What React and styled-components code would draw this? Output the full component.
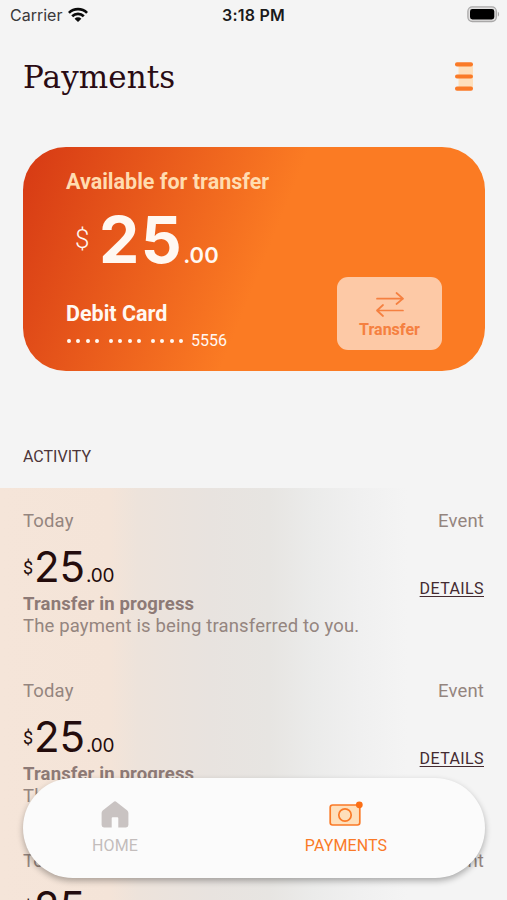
import styled, { createGlobalStyle } from 'styled-components';

const activities = [
  { id: 1, day: 'Today', whole: '25', cents: '.00', status: 'Transfer in progress', note: 'The payment is being transferred to you.' },
  { id: 2, day: 'Today', whole: '25', cents: '.00', status: 'Transfer in progress', note: 'The payment is being transferred to you.' },
  { id: 3, day: 'Today', whole: '25', cents: '.00', status: 'Transfer in progress', note: 'The payment is being transferred to you.' },
];

function StatusBar() {
  return (
    <Status>
      <Carrier>
        Carrier
        <svg width="20" height="16" viewBox="0 0 20 16">
          <g fill="none" stroke="#0b0b0b" strokeWidth="2.7">
            <path d="M0.9 5.9a13 13 0 0 1 18.2 0" />
            <path d="M4.2 9.3a8.3 8.3 0 0 1 11.6 0" />
          </g>
          <path d="M6.6 11.7a4.8 4.8 0 0 1 6.8 0L10 15.1z" fill="#0b0b0b" />
        </svg>
      </Carrier>
      <Clock>3:18 PM</Clock>
      <Battery>
        <svg width="33" height="17" viewBox="0 0 33 17">
          <rect x="0.9" y="0.9" width="28.4" height="14.6" rx="4.4" fill="#e2e1e1" stroke="#a9a8a8" strokeWidth="1.3" />
          <rect x="3" y="3" width="24.3" height="10.4" rx="2.4" fill="#000" />
          <path d="M30.8 5.8c1.7.6 1.7 4.2 0 4.8z" fill="#a9a8a8" />
        </svg>
      </Battery>
    </Status>
  );
}

function Activity({ day, whole, cents, status, note }) {
  return (
    <Item>
      <ItemTop>
        <span>{day}</span>
        <span>Event</span>
      </ItemTop>
      <ItemMiddle>
        <Price>
          <PriceSign>$</PriceSign>
          <PriceWhole>{whole}</PriceWhole>
          <PriceCents>{cents}</PriceCents>
        </Price>
        <Details>DETAILS</Details>
      </ItemMiddle>
      <ItemStatus>{status}</ItemStatus>
      <ItemNote>{note}</ItemNote>
    </Item>
  );
}

function App() {
  return (
    <>
      <GlobalStyle />
      <Screen>
        <StatusBar />
        <Header>
          <Title>Payments</Title>
          <MenuButton aria-label="Menu">
            <svg width="18" height="30" viewBox="0 0 18 30">
              <rect x="3.5" y="4" width="14.5" height="22" fill="#fedfbb" />
              <g fill="#fa7a27">
                <rect x="0" y="0.3" width="18" height="4.2" rx="2" />
                <rect x="0" y="12.4" width="18" height="4.2" rx="2" />
                <rect x="0" y="24.6" width="18" height="4.2" rx="2" />
              </g>
            </svg>
          </MenuButton>
        </Header>

        <Card>
          <CardLabel>Available for transfer</CardLabel>
          <Balance>
            <BalanceSign>$</BalanceSign>
            <BalanceWhole>25</BalanceWhole>
            <BalanceCents>.00</BalanceCents>
          </Balance>
          <CardBottom>
            <CardInfo>
              <CardName>Debit Card</CardName>
              <CardNumber>
                <Dots>
                  {[0, 1, 2].map((group) => (
                    <DotGroup key={group}>
                      <Dot /><Dot /><Dot /><Dot />
                    </DotGroup>
                  ))}
                </Dots>
                5556
              </CardNumber>
            </CardInfo>
            <TransferButton>
              <svg width="28" height="25" viewBox="0 0 28 25" fill="none" stroke="#f58040" strokeWidth="1.7" strokeLinecap="round" strokeLinejoin="round">
                <path d="M1 6.7H27M20.5 1l6.5 5.7-6.5 5.3" />
                <path d="M27 18.5H1M7 13l-6 5.5L7 24" />
              </svg>
              Transfer
            </TransferButton>
          </CardBottom>
        </Card>

        <SectionTitle>ACTIVITY</SectionTitle>
        <List>
          {activities.map((item) => (
            <Activity key={item.id} {...item} />
          ))}
        </List>

        <TabBar>
          <Tab>
            <svg width="28" height="27" viewBox="0 0 28 27">
              <path d="M12.5 0.9a2.2 2.2 0 0 1 3 0L26.3 9.6q1.1 1 1.1 2.5V24q0 2.4-2.4 2.4H17.3V17.2q0-1-1-1h-4.6q-1 0-1 1v9.2H3Q.6 26.4.6 24V12.1q0-1.5 1.1-2.5z" fill="#c9c3c2" />
            </svg>
            HOME
          </Tab>
          <Tab $active>
            <svg width="34" height="27" viewBox="0 0 34 27">
              <rect x="1.2" y="4" width="29.6" height="20" rx="2.4" fill="#fedfbb" stroke="#fa7a27" strokeWidth="1.7" />
              <circle cx="16" cy="14" r="6.2" fill="#fedfbb" stroke="#fa7a27" strokeWidth="1.7" />
              <circle cx="30.3" cy="3.8" r="3.4" fill="#fb6f16" />
            </svg>
            PAYMENTS
          </Tab>
        </TabBar>
      </Screen>
    </>
  );
}

export default App;


const GlobalStyle = createGlobalStyle`
  * {
    box-sizing: border-box;
  }

  body {
    margin: 0;
    background: #f4f4f4;
    font-family: Roboto, 'Liberation Sans', sans-serif;
  }

  svg {
    display: block;
    flex-shrink: 0;
  }

  button {
    padding: 0;
    border: 0;
    background: none;
    font: inherit;
  }
`;

const Screen = styled.div`
  position: relative;
  display: flex;
  flex-direction: column;
  width: 507px;
  height: 900px;
  overflow: hidden;
  background: #f4f4f4;
`;

const Status = styled.div`
  display: grid;
  grid-template-columns: 1fr auto 1fr;
  align-items: center;
  height: 30px;
  padding: 0 7px 0 10px;
  font-family: Inter, sans-serif;
  font-size: 16px;
  color: #1b1a1b;
`;

const Carrier = styled.div`
  display: flex;
  align-items: center;
  gap: 6px;
  color: #3a393a;
`;

const Clock = styled.div`
  margin-left: -3px;
  font-weight: 600;
  letter-spacing: 0.2px;
`;

const Battery = styled.div`
  display: flex;
  justify-content: flex-end;
  padding-bottom: 2px;
`;

const Header = styled.header`
  display: flex;
  justify-content: space-between;
  align-items: center;
  height: 94px;
  padding: 0 34px 0 23px;
`;

const Title = styled.h1`
  margin: 0;
  font-family: 'Roboto Slab', 'DejaVu Serif', serif;
  font-size: 31px;
  font-weight: 400;
  line-height: 40px;
  letter-spacing: 0.1px;
  color: #2a0b13;
`;

const MenuButton = styled.button`
  width: 18px;
`;

const Card = styled.section`
  display: flex;
  flex-direction: column;
  width: 462px;
  height: 224px;
  margin: 23px 0 0 23px;
  padding: 23px 43px 22px;
  border-radius: 43px;
  background: linear-gradient(112deg, #d63914 0%, #fb7b23 52%);
  color: #fff8f2;
`;

const CardLabel = styled.div`
  font-size: 21.5px;
  font-weight: 700;
  line-height: 24px;
  color: #ffdcb0;
`;

const Balance = styled.div`
  display: flex;
  align-items: flex-start;
  height: 60px;
  margin-top: 15px;
  padding-left: 9px;
  font-family: Inter, sans-serif;
`;

const BalanceSign = styled.span`
  width: 24px;
  margin-top: 15px;
  font-family: Roboto, sans-serif;
  font-size: 26px;
  font-weight: 300;
  line-height: 30px;
`;

const BalanceWhole = styled.span`
  margin-top: 1px;
  font-size: 64px;
  font-weight: 700;
  line-height: 60px;
  letter-spacing: 1.5px;
`;

const BalanceCents = styled.span`
  margin-top: 34px;
  font-size: 22px;
  font-weight: 600;
  line-height: 24px;
`;

const CardBottom = styled.div`
  display: flex;
  justify-content: space-between;
  align-items: flex-start;
  margin-top: 8px;
`;

const CardInfo = styled.div`
  padding-top: 25px;
`;

const CardName = styled.div`
  font-size: 21.5px;
  font-weight: 700;
  line-height: 24px;
`;

const CardNumber = styled.div`
  display: flex;
  align-items: center;
  gap: 8px;
  margin-top: 5px;
  font-size: 16px;
  line-height: 20px;
`;

const Dots = styled.div`
  display: flex;
  gap: 10px;
  padding-left: 1px;
`;

const DotGroup = styled.div`
  display: flex;
  gap: 5.6px;
`;

const Dot = styled.span`
  width: 3.8px;
  height: 3.8px;
  border-radius: 50%;
  background: #fff8f2;
`;

const TransferButton = styled.button`
  display: flex;
  flex-direction: column;
  align-items: center;
  gap: 2px;
  width: 105px;
  height: 73px;
  padding-top: 15px;
  border-radius: 11px;
  background: #fdc9a6;
  font-size: 16px;
  font-weight: 700;
  line-height: 21px;
  color: #f58040;
`;

const SectionTitle = styled.h2`
  margin: 76px 0 0 23px;
  font-size: 16px;
  font-weight: 400;
  line-height: 20px;
  color: #4c3438;
`;

const List = styled.div`
  flex: 1;
  min-height: 0;
  margin-top: 21px;
  overflow: hidden;
  background: linear-gradient(90deg, #f5e5d9 0, #f4e4d8 110px, #ede3db 138px, #e8e3df 210px, #e7e5e2 270px, #ebebea 312px, #f0f0f0 360px, #f4f4f4 407px);
`;

const Item = styled.article`
  height: 170px;
  padding: 22px 23px 0;
`;

const ItemTop = styled.div`
  display: flex;
  justify-content: space-between;
  font-size: 18.5px;
  line-height: 22px;
  letter-spacing: 0.15px;
  color: #94857f;
`;

const ItemMiddle = styled.div`
  display: flex;
  justify-content: space-between;
  height: 61px;
`;

const Price = styled.div`
  display: flex;
  align-items: flex-start;
  padding-top: 14px;
  font-family: Inter, sans-serif;
  color: #240c0c;
`;

const PriceSign = styled.span`
  width: 11px;
  margin-top: 10px;
  font-family: Roboto, sans-serif;
  font-size: 18px;
  line-height: 24px;
`;

const PriceWhole = styled.span`
  width: 52px;
  font-size: 42px;
  line-height: 42px;
`;

const PriceCents = styled.span`
  margin-top: 18px;
  font-size: 19px;
  line-height: 24px;
  letter-spacing: -0.3px;
`;

const Details = styled.a`
  align-self: flex-start;
  margin-top: 47px;
  font-size: 16px;
  line-height: 20px;
  letter-spacing: 0.4px;
  color: #432a30;
  text-decoration: underline;
  text-underline-offset: 2px;
`;

const ItemStatus = styled.div`
  font-size: 18.5px;
  font-weight: 700;
  line-height: 22px;
  letter-spacing: 0.15px;
  color: #8d7a76;
`;

const ItemNote = styled.div`
  font-size: 18.5px;
  line-height: 22px;
  letter-spacing: 0.15px;
  color: #94857f;
`;

const TabBar = styled.nav`
  position: absolute;
  left: 23px;
  bottom: 22px;
  display: grid;
  grid-template-columns: 184px 1fr;
  width: 462px;
  height: 100px;
  border-radius: 50px;
  background: #fbfbfb;
  box-shadow: 0 3px 6px rgba(0, 0, 0, 0.3);
`;

const Tab = styled.div`
  display: flex;
  flex-direction: column;
  align-items: center;
  gap: 8px;
  padding-top: 23px;
  font-size: 16px;
  line-height: 20px;
  letter-spacing: 0.1px;
  color: ${({ $active }) => ($active ? '#fa7a27' : '#c3bdbc')};
`;
